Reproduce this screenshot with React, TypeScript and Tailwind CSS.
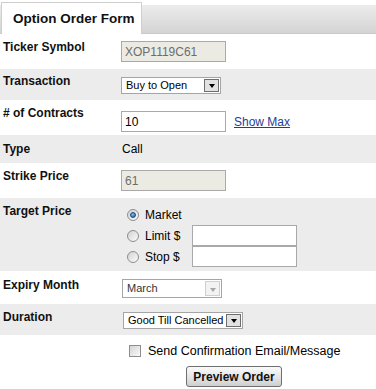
import React from "react";

function Label({ text, pt }: { text: string; pt: string }) {
  return (
    <div className={`w-[121px] shrink-0 pl-[3px] font-bold leading-[14px] text-[12px] text-[#111] ${pt}`}>{text}</div>
  );
}

function Input({ value, disabled, w = "w-[105px]", h = "h-[21px]" }: { value?: string; disabled?: boolean; w?: string; h?: string }) {
  return (
    <div
      className={`${w} ${h} border border-[#a9a9a9] px-[3px] flex items-center text-[12px] leading-[14px] ${
        disabled ? "bg-[#ebebe4] text-[#6d6d6d]" : "bg-white text-black"
      }`}
    >
      {value}
    </div>
  );
}

function Select({ value, w, h, disabled }: { value: string; w: string; h: string; disabled?: boolean }) {
  return (
    <div className={`${w} ${h} border border-[#a5a5a5] bg-white flex items-center text-[11px] leading-[13px] ${disabled ? "text-[#333]" : "text-black"}`}>
      <span className="pl-[4px] flex-1 whitespace-nowrap overflow-hidden">{value}</span>
      <div
        className={`w-[15px] h-[calc(100%-2px)] mr-px border flex items-end justify-center pb-[3px] ${
          disabled ? "border-[#d0d0d0] bg-[#f3f3f3]" : "border-[#6e6e6e] bg-[#e2e2e2]"
        }`}
      >
        <div
          className={`w-0 h-0 border-l-[3.5px] border-r-[3.5px] border-t-[4px] border-l-transparent border-r-transparent ${
            disabled ? "border-t-[#a8a8a8]" : "border-t-black"
          }`}
        />
      </div>
    </div>
  );
}

function Radio({ checked }: { checked?: boolean }) {
  return (
    <div className="w-[12px] h-[12px] rounded-full border border-[#8e8e8e] bg-[linear-gradient(135deg,#d2d2d2,#fbfbfb)] flex items-center justify-center shrink-0">
      {checked && <div className="w-[6px] h-[6px] rounded-full bg-[radial-gradient(circle_at_40%_35%,#7fc0ee,#1d5b96)] border border-[#174a7c]" />}
    </div>
  );
}

export default function App() {
  return (
    <div className="w-[376px] h-[389px] bg-white text-[12px] text-black font-[family-name:'Liberation_Sans',Arial,sans-serif] overflow-hidden">
      <div className="flex items-end h-[34px] border-b border-[#c9c9c9] bg-[linear-gradient(to_bottom,#ffffff_0px,#ffffff_5px,#ececec_5px,#d4d4d4_33px)]">
        <div className="ml-[1px] -mb-px h-[32px] w-[141px] bg-white border border-b-0 border-[#cfcfcf] pl-[11px] pt-[8px] text-[13.5px] font-bold leading-[16px] text-[#111]">
          Option Order Form
        </div>
      </div>

      {/* Ticker Symbol */}
      <div className="flex h-[35px] bg-white">
        <Label text="Ticker Symbol" pt="pt-[6px]" />
        <div className="pt-[7px]">
          <Input value="XOP1119C61" disabled />
        </div>
      </div>

      {/* Transaction */}
      <div className="flex h-[31px] bg-[#ececec]">
        <Label text="Transaction" pt="pt-[5px]" />
        <div className="pt-[8px]">
          <Select value="Buy to Open" w="w-[100px]" h="h-[17px]" />
        </div>
      </div>

      {/* Contracts */}
      <div className="flex h-[35px] bg-white">
        <Label text="# of Contracts" pt="pt-[6px]" />
        <div className="pt-[8px] flex items-center gap-[8px]">
          <Input value="10" />
          <a className="text-[12px] leading-[14px] text-[#1f3d99] underline">Show Max</a>
        </div>
      </div>

      {/* Type */}
      <div className="flex h-[28px] bg-[#ececec]">
        <Label text="Type" pt="pt-[7px]" />
        <div className="pt-[7px] pl-[1px] leading-[14px] text-[12px]">Call</div>
      </div>

      {/* Strike Price */}
      <div className="flex h-[35px] bg-white">
        <Label text="Strike Price" pt="pt-[6px]" />
        <div className="pt-[7px]">
          <Input value="61" disabled />
        </div>
      </div>

      {/* Target Price */}
      <div className="flex h-[73px] bg-[#ececec]">
        <Label text="Target Price" pt="pt-[6px]" />
        <div className="pt-[6px] pl-[6px] flex flex-col">
          <div className="flex items-center h-[21px]">
            <Radio checked />
            <span className="ml-[6px] leading-[14px]">Market</span>
          </div>
          <div className="flex items-center h-[21px]">
            <Radio />
            <span className="ml-[6px] w-[47px] leading-[14px]">Limit $</span>
            <Input w="w-[105px]" h="h-[21px]" />
          </div>
          <div className="flex items-center h-[21px]">
            <Radio />
            <span className="ml-[6px] w-[47px] leading-[14px]">Stop $</span>
            <Input w="w-[105px]" h="h-[21px]" />
          </div>
        </div>
      </div>

      {/* Expiry Month */}
      <div className="flex h-[33px] bg-white">
        <Label text="Expiry Month" pt="pt-[7px]" />
        <div className="pt-[8px] pl-[1px]">
          <Select value="March" w="w-[100px]" h="h-[19px]" disabled />
        </div>
      </div>

      {/* Duration */}
      <div className="flex h-[31px] bg-[#ececec]">
        <Label text="Duration" pt="pt-[6px]" />
        <div className="pt-[8px] pl-[2px]">
          <Select value="Good Till Cancelled" w="w-[120px]" h="h-[17px]" />
        </div>
      </div>

      {/* Checkbox */}
      <div className="flex items-start h-[27px] pl-[129px] pt-[10px] bg-white">
        <div className="w-[12px] h-[12px] border border-[#8e8e8e] bg-[linear-gradient(135deg,#d4d4d4,#fafafa)] shrink-0" />
        <span className="ml-[7px] leading-[14px] text-[12.5px] -mt-px">Send Confirmation Email/Message</span>
      </div>

      {/* Button */}
      <div className="pl-[186px] pt-[4px]">
        <div className="w-[96px] h-[21px] border border-[#6f6f6f] rounded-[3px] bg-[linear-gradient(to_bottom,#fafafa,#e6e6e6_50%,#cfcfcf)] flex items-center justify-center font-bold text-[12px] leading-[14px] text-[#111]">
          Preview Order
        </div>
      </div>
    </div>
  );
}
